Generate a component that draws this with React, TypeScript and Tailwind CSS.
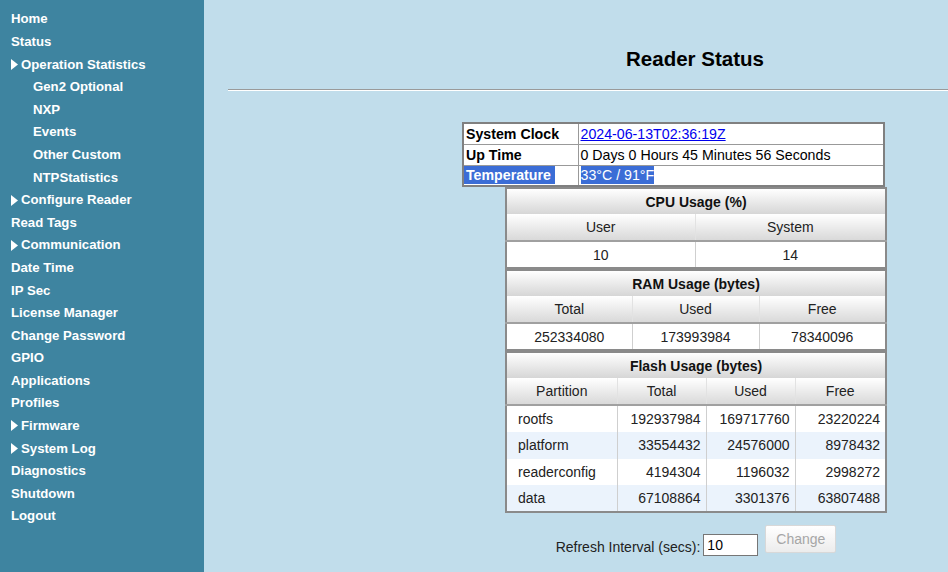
import * as React from "react";

type MenuItem = { label: string; arrow?: boolean; sub?: boolean };

const menu: MenuItem[] = [
  { label: "Home" },
  { label: "Status" },
  { label: "Operation Statistics", arrow: true },
  { label: "Gen2 Optional", sub: true },
  { label: "NXP", sub: true },
  { label: "Events", sub: true },
  { label: "Other Custom", sub: true },
  { label: "NTPStatistics", sub: true },
  { label: "Configure Reader", arrow: true },
  { label: "Read Tags" },
  { label: "Communication", arrow: true },
  { label: "Date Time" },
  { label: "IP Sec" },
  { label: "License Manager" },
  { label: "Change Password" },
  { label: "GPIO" },
  { label: "Applications" },
  { label: "Profiles" },
  { label: "Firmware", arrow: true },
  { label: "System Log", arrow: true },
  { label: "Diagnostics" },
  { label: "Shutdown" },
  { label: "Logout" },
];

const flashRows = [
  ["rootfs", "192937984", "169717760", "23220224"],
  ["platform", "33554432", "24576000", "8978432"],
  ["readerconfig", "4194304", "1196032", "2998272"],
  ["data", "67108864", "3301376", "63807488"],
];

function Arrow() {
  return (
    <svg width="7" height="11" viewBox="0 0 7 11" className="mr-[3px] inline-block">
      <polygon points="0,0 7,5.5 0,11" fill="white" />
    </svg>
  );
}

function Sidebar() {
  return (
    <nav className="w-[204px] shrink-0 bg-[#3e84a0] pt-[8px]">
      {menu.map((m) => (
        <div
          key={m.label}
          className={`flex h-[22.6px] items-center text-[13.2px] font-bold text-white ${
            m.sub ? "pl-[33px]" : "pl-[11px]"
          }`}
        >
          {m.arrow && <Arrow />}
          {m.label}
        </div>
      ))}
    </nav>
  );
}

const headCell =
  "bg-linear-to-b from-white to-[#d6d6d6] text-center font-bold text-[#111]";
const subCell =
  "bg-linear-to-b from-white to-[#d9d9d9] text-center font-normal text-[#222] border-l border-[#e2e2e2] first:border-l-0";

function StatTable({
  title,
  cols,
  rows,
  widths,
}: {
  title: string;
  cols: string[];
  rows: string[][];
  widths: string[];
}) {
  const isFlash = cols.length === 4;
  return (
    <table className="w-[380px] table-fixed border-collapse border-2 border-[#8a8a8a] bg-white text-[14px] leading-[18px]">
      <colgroup>
        {widths.map((w, i) => (
          <col key={i} style={{ width: w }} />
        ))}
      </colgroup>
      <thead>
        <tr className="h-[26px]">
          <th colSpan={cols.length} className={headCell}>
            {title}
          </th>
        </tr>
        <tr className="h-[27px] border-b-2 border-[#a0a0a0]">
          {cols.map((c) => (
            <th key={c} className={subCell}>
              {c}
            </th>
          ))}
        </tr>
      </thead>
      <tbody>
        {rows.map((r, ri) => (
          <tr
            key={ri}
            className={`${isFlash ? "h-[26.75px]" : "h-[27px]"} ${
              isFlash && ri % 2 === 1 ? "bg-[#ebf3fc]" : "bg-white"
            }`}
          >
            {r.map((v, ci) => (
              <td
                key={ci}
                className={`border-l border-[#cfcfcf] first:border-l-0 text-[#222] ${
                  isFlash ? (ci === 0 ? "pl-[11px] text-left" : "pr-[5px] text-right") : "text-center"
                }`}
              >
                {v}
              </td>
            ))}
          </tr>
        ))}
      </tbody>
    </table>
  );
}

export default function App() {
  return (
    <div
      className="flex h-[572px] w-[948px] overflow-hidden"
      style={{ fontFamily: '"Liberation Sans", Arial, sans-serif' }}
    >
      <Sidebar />
      <main className="flex-1 overflow-hidden bg-[#c1ddeb]">
        <div className="ml-[24px] w-[934px]">
          <h1 className="pt-[45px] text-center text-[20.5px] font-bold leading-[28px] text-black">
            Reader Status
          </h1>
          <div className="mt-[16px] h-[2px] border-t border-[#9a9a9a] border-b-white border-b" />
          <div className="mt-[31px] flex flex-col items-start">
            <table className="ml-[234px] w-[423px] border-collapse border-2 border-[#808080] bg-white text-[14.2px] leading-[18px] text-black">
              <tbody>
                <tr className="h-[21px]">
                  <td className="w-[115px] border border-[#999] pl-[2px] font-bold">System Clock</td>
                  <td className="border border-[#999] pl-[2px]">
                    <a href="#" className="text-[#0000ee] underline">
                      2024-06-13T02:36:19Z
                    </a>
                  </td>
                </tr>
                <tr className="h-[21px]">
                  <td className="border border-[#999] pl-[2px] font-bold">Up Time</td>
                  <td className="border border-[#999] pl-[2px]">0 Days 0 Hours 45 Minutes 56 Seconds</td>
                </tr>
                <tr className="h-[21px]">
                  <td className="border border-[#999] pl-0 font-bold">
                    <span className="inline-block bg-[#3b6dd6] pl-[2px] pr-[4px] text-white">Temperature</span>
                  </td>
                  <td className="border border-[#999] pl-[2px]">
                    <span className="inline-block bg-[#3b6dd6] text-white">33°C / 91°F</span>
                  </td>
                </tr>
              </tbody>
            </table>
            <div className="ml-[277px]">
              <StatTable
                title="CPU Usage (%)"
                cols={["User", "System"]}
                rows={[["10", "14"]]}
                widths={["189px", "191px"]}
              />
              <StatTable
                title="RAM Usage (bytes)"
                cols={["Total", "Used", "Free"]}
                rows={[["252334080", "173993984", "78340096"]]}
                widths={["126px", "127px", "127px"]}
              />
              <StatTable
                title="Flash Usage (bytes)"
                cols={["Partition", "Total", "Used", "Free"]}
                rows={flashRows}
                widths={["111px", "89px", "89px", "91px"]}
              />
            </div>
          </div>
          <div className="mt-[12px] flex items-start justify-center pl-[2px] text-[14px] text-[#222]">
            <span className="mt-[12px]">Refresh Interval (secs):</span>
            <input
              defaultValue="10"
              className="ml-[3px] mt-[9px] h-[22px] w-[55px] border border-[#767676] bg-white px-[3px] text-[14px] text-black outline-none"
            />
            <button
              disabled
              className="ml-[7px] h-[28px] w-[71px] rounded-[2px] border border-[#d8d8d8] bg-linear-to-b from-white to-[#ececec] text-[14px] text-[#a6a6a6]"
            >
              Change
            </button>
          </div>
        </div>
      </main>
    </div>
  );
}
